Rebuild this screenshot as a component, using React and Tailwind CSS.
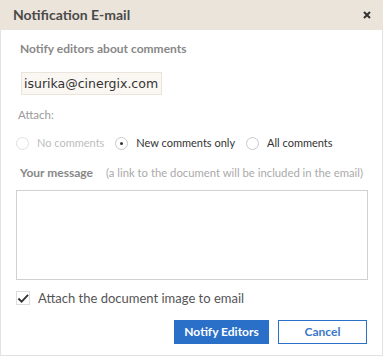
import { useState } from 'react'

const LATO = { fontFamily: 'Lato, "Open Sans", sans-serif' }

function Radio({ checked, disabled, label, onClick }) {
    return (
        <label className="flex items-center gap-[8px] cursor-pointer" onClick={onClick}>
            <span className={`w-[13px] h-[13px] rounded-full border flex items-center justify-center bg-white ${disabled ? 'border-[#e0e0e0]' : 'border-[#c8c8c8]'}`}>
                {checked && <span className="w-[3px] h-[3px] rounded-full bg-[#333]" />}
            </span>
            <span className={`text-[11px] leading-[14px] ${disabled ? 'text-[#bdbdbd]' : 'text-[#333]'}`}>{label}</span>
        </label>
    )
}

export default function App() {
    const [attach, setAttach] = useState('new')
    const [withImage, setWithImage] = useState(true)

    return (
        <div className="w-[383px] h-[358px] bg-white flex flex-col" style={LATO}>
            {/* Header */}
            <div className="h-[30px] bg-[#ebe4da] flex items-center justify-between pl-[13px] pr-[12px] shrink-0">
                <h1 className="text-[14px] leading-[16px] font-bold text-[#4a4a4a]">Notification E-mail</h1>
                <button className="leading-none">
                    <svg width="8" height="8" viewBox="0 0 8 8">
                        <path d="M1 1L7 7M7 1L1 7" stroke="#333" strokeWidth="2" />
                    </svg>
                </button>
            </div>

            {/* Body */}
            <div className="h-[326px] border-x border-b border-[#e2e2e2] px-[15px] flex flex-col">
                <p className="text-[12px] leading-[16px] font-bold text-[#888] mt-[11px] pl-[4px]">Notify editors about comments</p>

                <div className="mt-[15px] pl-[5px] flex">
                    <span
                        className="h-[23px] leading-[21px] pl-[2px] pr-[3px] bg-[#faf7f2] border border-[#ebe4da] text-[#333]"
                        style={{ fontFamily: '"DejaVu Sans", Verdana, sans-serif', fontSize: '12.5px' }}
                    >
                        isurika@cinergix.com
                    </span>
                </div>

                <p className="text-[11.5px] leading-[16px] text-[#999] mt-[12px] pl-[2px]">Attach:</p>

                <div className="flex items-center mt-[13px] gap-[11px]">
                    <Radio disabled label="No comments" checked={attach === 'none'} />
                    <Radio label="New comments only" checked={attach === 'new'} onClick={() => setAttach('new')} />
                    <Radio label="All comments" checked={attach === 'all'} onClick={() => setAttach('all')} />
                </div>

                <div className="flex items-baseline mt-[15px] pl-[4px] whitespace-nowrap">
                    <span className="text-[12px] leading-[16px] font-bold text-[#888]">Your message</span>
                    <span className="text-[11.3px] leading-[16px] text-[#aaa] ml-[13px]">(a link to the document will be included in the email)</span>
                </div>

                <textarea className="mt-[9px] h-[90px] w-[352px] border border-[#d0d0d0] resize-none outline-none p-2 text-[13px] shrink-0" />

                <label className="flex items-center mt-[10px] gap-[8px] cursor-pointer" onClick={() => setWithImage(!withImage)}>
                    <span className="w-[14px] h-[14px] border border-[#ddd] flex items-center justify-center shrink-0">
                        {withImage && (
                            <svg width="13" height="11" viewBox="0 0 13 11">
                                <path d="M1.5 5.5L5 9L12 1.5" fill="none" stroke="#333" strokeWidth="2" />
                            </svg>
                        )}
                    </span>
                    <span className="text-[13px] leading-[16px] text-[#555]">Attach the document image to email</span>
                </label>

                <div className="flex justify-end gap-[9px] mt-[14px]">
                    <button className="w-[95px] h-[24px] bg-[#2a70c9] text-white text-[12px] font-bold">Notify Editors</button>
                    <button className="w-[89px] h-[24px] bg-white border border-[#2a70c9] text-[#3a78c5] text-[12px] font-bold">Cancel</button>
                </div>
            </div>
        </div>
    )
}
